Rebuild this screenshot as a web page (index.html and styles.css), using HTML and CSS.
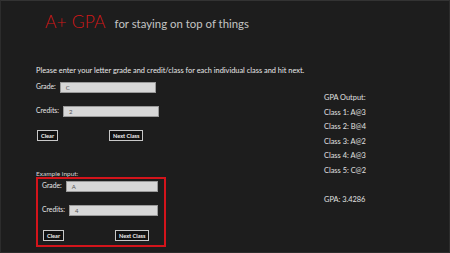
FILE: index.html
```html
<!DOCTYPE html>
<html lang="en">
<head>
    <meta charset="UTF-8">
    <meta name="viewport" content="width=device-width, initial-scale=1.0">
    <title>A+ GPA</title>
    <link rel="stylesheet" href="styles.css">
</head>
<body>
    <div class="page">
        <header class="header">
            <h1 class="title">A+ GPA</h1>
            <span class="subtitle">for staying on top of things</span>
        </header>

        <p class="intro">Please enter your letter grade and credit/class for each individual class and hit next.</p>

        <div class="main">
            <div class="left">
                <div class="entry">
                    <div class="row row-grade">
                        <label>Grade:</label>
                        <div class="field field-grade">C</div>
                    </div>
                    <div class="row row-credits">
                        <label>Credits:</label>
                        <div class="field field-credits">2</div>
                    </div>
                    <div class="buttons">
                        <button class="btn">Clear</button>
                        <button class="btn btn-next">Next Class</button>
                    </div>
                </div>

                <div class="example-label">Example input:</div>
                <div class="entry example">
                    <div class="row row-grade">
                        <label>Grade:</label>
                        <div class="field field-grade">A</div>
                    </div>
                    <div class="row row-credits">
                        <label>Credits:</label>
                        <div class="field field-credits">4</div>
                    </div>
                    <div class="buttons">
                        <button class="btn">Clear</button>
                        <button class="btn btn-next">Next Class</button>
                    </div>
                </div>
            </div>

            <div class="output">
                <div>GPA Output:</div>
                <div>Class 1: A@3</div>
                <div>Class 2: B@4</div>
                <div>Class 3: A@2</div>
                <div>Class 4: A@3</div>
                <div>Class 5: C@2</div>
                <div class="gpa">GPA: 3.4286</div>
            </div>
        </div>
    </div>
</body>
</html>
```

FILE: styles.css
```css
* {
    box-sizing: border-box;
    margin: 0;
    padding: 0;
    font-family: 'Segoe UI', Lato, 'Open Sans', sans-serif;
}

body {
    background-color: #1d1d1d;
    width: 450px;
    height: 253px;
    overflow: hidden;
}

.page {
    height: 253px;
    border: 1px solid #2c2c2c;
    border-top-color: #333;
    padding-left: 35px;
}

.header {
    display: flex;
    align-items: baseline;
    height: 56px;
    padding-left: 9px;
    padding-top: 10px;
}

.title {
    color: #d01818;
    font-size: 17.5px;
    font-weight: 300;
    letter-spacing: 0.1px;
    margin-right: 9px;
}

.subtitle {
    color: #c4c4c4;
    font-size: 11.4px;
    font-weight: 400;
}

.intro {
    color: #e8e8e8;
    font-size: 7.4px;
    line-height: 10px;
    margin-top: 9px;
}

.main {
    display: flex;
}

.left {
    width: 288px;
}

.entry {
    width: 130px;
}

.row {
    display: flex;
    align-items: flex-start;
    color: #e6e6e6;
    font-size: 6.8px;
}

.row label {
    margin-right: 4px;
}

.row-grade {
    margin-top: 6px;
}

.row-credits {
    margin-top: 13px;
}

.field {
    flex: 1;
    height: 11px;
    background-color: #d7d7d7;
    border: 1px solid #9a9a9a;
    color: #555;
    font-size: 6px;
    padding-left: 5px;
    line-height: 9px;
    max-width: 96px;
}

.buttons {
    display: flex;
    margin-top: 13px;
    padding-left: 1px;
}

.btn {
    background-color: #111;
    color: #f0f0f0;
    border: 1.5px solid #c8c8c8;
    font-size: 5.6px;
    font-weight: 700;
    height: 11px;
    padding: 0 3px;
}

.btn-next {
    margin-left: 51px;
}

.example-label {
    color: #d6d6d6;
    font-size: 6.5px;
    margin-top: 29px;
}

.example {
    width: 130px;
    height: 70px;
    border: 2px solid #d3141b;
    padding: 0 6px 0 4px;
}

.example .row-grade {
    margin-top: 2px;
}

.example .field-grade {
    max-width: 97px;
}

.example .field-credits {
    max-width: 95px;
}

.example .row-credits {
    margin-top: 13px;
}

.example .buttons {
    margin-top: 14px;
}

.example .btn-next {
    margin-left: 51px;
}

.output {
    color: #e0e0e0;
    font-size: 7.4px;
    line-height: 14.6px;
    padding-top: 15px;
}

.gpa {
    margin-top: 14px;
}
```
